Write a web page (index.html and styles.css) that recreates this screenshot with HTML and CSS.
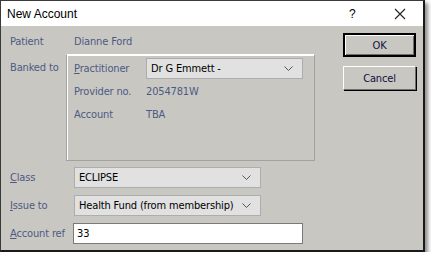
FILE: index.html
```html
<!DOCTYPE html>
<html lang="en">
  <head>
    <meta charset="UTF-8" />
    <title>New Account</title>
    <link rel="stylesheet" href="styles.css">
  </head>
  <body>
    <div class="window">
      <!-- Title bar -->
      <div class="title-bar">
        <span class="title">New Account</span>
        <span class="help-button">?</span>
        <span class="close-button">
          <svg width="12" height="12" viewBox="0 0 12 12">
            <path d="M1 1 L11 11 M11 1 L1 11" stroke="#222" stroke-width="1.1" fill="none" />
          </svg>
        </span>
      </div>

      <div class="dialog-body">
        <div class="form">
          <div class="row patient-row">
            <span class="label">Patient</span>
            <span class="value">Dianne Ford</span>
          </div>

          <div class="row banked-row">
            <span class="label">Banked to</span>
            <div class="group-box">
              <div class="group-row">
                <span class="label wide"><u>P</u>ractitioner</span>
                <div class="select practitioner-select">
                  <span>Dr G Emmett -</span>
                  <svg class="chevron" width="9" height="5" viewBox="0 0 9 5"><path d="M0.5 0.5 L4.5 4.5 L8.5 0.5" stroke="#555" fill="none" /></svg>
                </div>
              </div>
              <div class="group-row">
                <span class="label wide">Provider no.</span>
                <span class="value">2054781W</span>
              </div>
              <div class="group-row">
                <span class="label wide">Account</span>
                <span class="value">TBA</span>
              </div>
            </div>
          </div>

          <div class="row field-row">
            <span class="label"><u>C</u>lass</span>
            <div class="select">
              <span>ECLIPSE</span>
              <svg class="chevron" width="9" height="5" viewBox="0 0 9 5"><path d="M0.5 0.5 L4.5 4.5 L8.5 0.5" stroke="#555" fill="none" /></svg>
            </div>
          </div>
          <div class="row field-row">
            <span class="label"><u>I</u>ssue to</span>
            <div class="select">
              <span>Health Fund (from membership)</span>
              <svg class="chevron" width="9" height="5" viewBox="0 0 9 5"><path d="M0.5 0.5 L4.5 4.5 L8.5 0.5" stroke="#555" fill="none" /></svg>
            </div>
          </div>
          <div class="row field-row">
            <span class="label"><u>A</u>ccount ref</span>
            <input type="text" class="input-field" value="33" />
          </div>
        </div>

        <div class="buttons">
          <button class="button default-button">OK</button>
          <button class="button">Cancel</button>
        </div>
      </div>
    </div>
  </body>
</html>
```

FILE: styles.css
```css
body {
  margin: 0;
  background-color: #ffffff;
  font-family: "DejaVu Sans Condensed", "DejaVu Sans", sans-serif;
  font-stretch: condensed;
  font-size: 11px;
  letter-spacing: -0.15px;
}
.window {
  width: 422px;
  height: 249px;
  border: 1px solid #3a3a3a;
  border-right-width: 2px;
  border-bottom-width: 2px;
  border-right-color: #1a1a1a;
  border-bottom-color: #1a1a1a;
  background-color: #c9c7c2;
  box-shadow: 3px 3px 4px rgba(0, 0, 0, 0.45);
  display: flex;
  flex-direction: column;
}
.title-bar {
  height: 25px;
  background-color: #ffffff;
  display: flex;
  align-items: center;
  letter-spacing: 0;
}
.title {
  font-family: "Liberation Sans", Arial, sans-serif;
  font-stretch: normal;
  font-size: 12px;
  color: #000;
  padding-left: 6px;
  flex-grow: 1;
}
.help-button {
  font-family: "Liberation Sans", Arial, sans-serif;
  font-stretch: normal;
  font-size: 12px;
  width: 12px;
  margin-right: 33px;
}
.close-button {
  display: flex;
  margin-right: 17px;
}
.dialog-body {
  display: flex;
  flex-grow: 1;
}
.form {
  width: 331px;
  padding-left: 9px;
  padding-top: 5px;
}
.row {
  display: flex;
  align-items: center;
}
.patient-row {
  height: 20px;
}
.banked-row {
  align-items: flex-start;
  margin-top: 3px;
}
.banked-row > .label {
  width: 56px;
  margin-top: 7px;
}
.label {
  width: 64px;
  color: #4c5a84;
  white-space: nowrap;
}
.label.wide {
  width: 72px;
}
.value {
  color: #4c5a84;
}
.group-box {
  width: 240px;
  height: 102px;
  border: 1px solid #a2a2a2;
  border-top-color: #ffffff;
  box-shadow: inset 1px 1px 0 #ffffff;
  padding: 3px 0 0 7px;
}
.group-row {
  display: flex;
  align-items: center;
  height: 21px;
}
.group-row + .group-row {
  margin-top: 2px;
}
.select {
  box-sizing: border-box;
  width: 187px;
  height: 21px;
  background-color: #e1e1e1;
  border: 1px solid #adadad;
  display: flex;
  align-items: center;
  justify-content: space-between;
  padding: 0 9px 0 4px;
  color: #000;
}
.practitioner-select {
  width: 157px;
}
.chevron {
  display: block;
}
.field-row {
  height: 21px;
  margin-top: 7px;
}
.banked-row + .field-row {
  margin-top: 6px;
}
.input-field {
  box-sizing: border-box;
  width: 230px;
  height: 21px;
  margin: 0 0 0 -1px;
  padding: 0 3px;
  border: 1px solid #7a7a7a;
  background-color: #ffffff;
  font-family: inherit;
  font-stretch: condensed;
  font-size: 11px;
  letter-spacing: inherit;
  color: #000;
  outline: none;
}
.buttons {
  display: flex;
  flex-direction: column;
  padding-top: 7px;
  padding-left: 2px;
}
.button {
  box-sizing: border-box;
  width: 73px;
  height: 24px;
  margin-bottom: 9px;
  background-color: #c9c7c2;
  border: 1px solid #6e6e6e;
  border-top-color: #ffffff;
  border-left-color: #ffffff;
  box-shadow: 1px 1px 0 #000;
  font-family: inherit;
  font-stretch: condensed;
  font-size: 11px;
  letter-spacing: inherit;
  color: #101040;
  padding: 0;
}
.default-button {
  border: 2px solid #000;
  box-shadow: inset 1px 1px 0 #ffffff, inset -1px -1px 0 #6e6e6e;
}
```
